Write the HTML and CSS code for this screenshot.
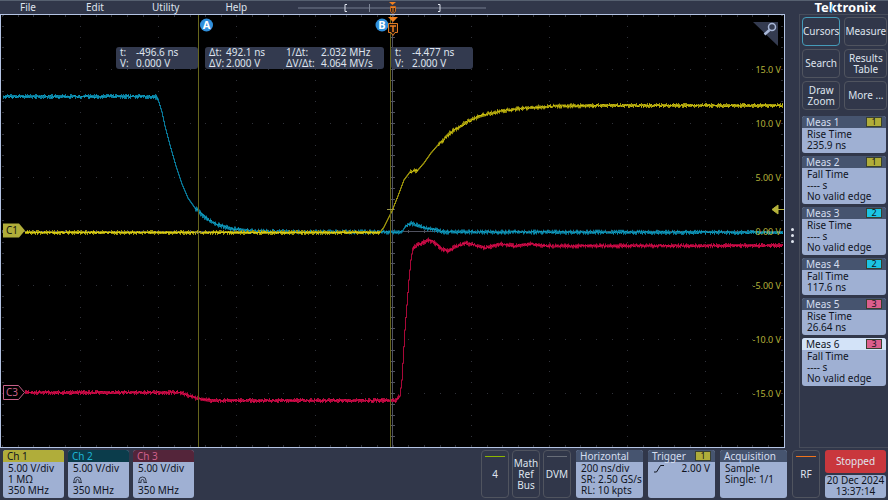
FILE: index.html
```
<!DOCTYPE html>
<html lang="en">
<head>
    <meta charset="UTF-8">
    <title>Tektronix</title>
    <link rel="stylesheet" href="styles.css">
</head>
<body>

<header class="topbar">
    <nav class="menu">
        <button>File</button>
        <button>Edit</button>
        <button>Utility</button>
        <button>Help</button>
    </nav>
    <svg class="record" width="190" height="14" viewBox="297 0 190 14" aria-hidden="true">
        <path d="M298 7H486" stroke="#747c8e"/>
        <path d="M369.500 3v8" stroke="#7d8596"/>
        <path d="M347 3.500h-2v7h2M438 3.500h2v7h-2" stroke="#dfe4ee" fill="none"/>
        <path d="M389 1h7l-3.500 3z" fill="#f08020"/>
        <path d="M390.500 5.500h5v5l-2.500 2l-2.500 -2z" fill="#30261f" stroke="#c96c22"/>
        <path d="M391 6.500h4M393 7v4" stroke="#f08020"/>
    </svg>
    <div class="logo">Tektronix</div>
</header>

<main class="middle">
    <section class="plot">
        <svg class="screen" viewBox="1 15 783 432" preserveAspectRatio="none">
            <g id="grid"></g>
            <g id="traces"></g>
            <path class="cursor_line" d="M198.500 15V447M390.500 15V447"/>
            <path class="cross" d="M387 209.500h7M195 232.500h7"/>
            <g class="scale">
                <text x="781" y="73">15.0 V</text>
                <text x="781" y="127">10.0 V</text>
                <text x="781" y="181">5.00 V</text>
                <text x="781" y="235">0.00 V</text>
                <text x="781" y="289">-5.00 V</text>
                <text x="781" y="343">-10.0 V</text>
                <text x="781" y="397">-15.0 V</text>
            </g>
            <path d="M784 209.500h-7M778 205l-6 4.500l6 4.500z" fill="#b5b23a" stroke="#b5b23a"/>
            <path d="M3 223.500h16l6 7l-6 7h-16z" fill="#b0ad3a"/>
            <text class="tag tag_1" x="6" y="234">C1</text>
            <path d="M3.500 385.500h15l6 7l-6 7h-15z" fill="#000" stroke="#c66088"/>
            <text class="tag tag_3" x="6" y="396">C3</text>
            <circle cx="206.500" cy="25" r="6.500" fill="#2f8fdc"/>
            <text class="knob" x="206.500" y="29">A</text>
            <circle cx="382" cy="25" r="6.500" fill="#2f8fdc"/>
            <text class="knob" x="382" y="29">B</text>
            <path d="M388 17h10l-5 5z" fill="#f08020"/>
            <path d="M388.500 23.500h9v9h-2.500l-2 3l-2 -3h-2.500z" fill="#1a120c" stroke="#e07a22"/>
            <path d="M390 26h6M393 26v6" stroke="#f08020" stroke-width="1.500"/>
            <path d="M753 22h25v24z" fill="#343b50"/>
            <circle cx="772" cy="27" r="3.500" fill="none" stroke="#a9b8d8" stroke-width="1.500"/>
            <path d="M769.500 30l-5 4.500" stroke="#a9b8d8" stroke-width="2.500"/>
        </svg>
        <div class="readouts">
            <div class="readout readout_a">
                <span>t:</span><span>-496.6 ns</span>
                <span>V:</span><span>0.000 V</span>
            </div>
            <div class="readout readout_delta">
                <span>Δt:</span><span>492.1 ns</span><span>1/Δt:</span><span>2.032 MHz</span>
                <span>ΔV:</span><span>2.000 V</span><span>ΔV/Δt:</span><span>4.064 MV/s</span>
            </div>
            <div class="readout readout_b">
                <span>t:</span><span>-4.477 ns</span>
                <span>V:</span><span>2.000 V</span>
            </div>
        </div>
    </section>

    <div class="handle"><i></i><i></i><i></i></div>

    <aside class="side">
        <div class="tools">
            <button class="tool active">Cursors</button>
            <button class="tool">Measure</button>
            <button class="tool">Search</button>
            <button class="tool">Results<br>Table</button>
            <button class="tool">Draw<br>Zoom</button>
            <button class="tool">More ...</button>
        </div>
        <div class="card">
            <h3>Meas 1 <b class="badge ch_1">1</b></h3>
            <p>Rise Time<br>235.9 ns</p>
        </div>
        <div class="card">
            <h3>Meas 2 <b class="badge ch_1">1</b></h3>
            <p>Fall Time<br>---- s<br>No valid edge</p>
        </div>
        <div class="card">
            <h3>Meas 3 <b class="badge ch_2">2</b></h3>
            <p>Rise Time<br>---- s<br>No valid edge</p>
        </div>
        <div class="card">
            <h3>Meas 4 <b class="badge ch_2">2</b></h3>
            <p>Fall Time<br>117.6 ns</p>
        </div>
        <div class="card">
            <h3>Meas 5 <b class="badge ch_3">3</b></h3>
            <p>Rise Time<br>26.64 ns</p>
        </div>
        <div class="card selected">
            <h3>Meas 6 <b class="badge ch_3">3</b></h3>
            <p>Fall Time<br>---- s<br>No valid edge</p>
        </div>
    </aside>
</main>

<footer class="bottom">
    <div class="channels">
        <div class="card channel_1">
            <h3>Ch 1</h3>
            <p>5.00 V/div<br>1 MΩ<br>350 MHz</p>
        </div>
        <div class="card channel_2">
            <h3>Ch 2</h3>
            <p>5.00 V/div<br><svg class="probe" width="9" height="8" viewBox="0 0 9 8"><path d="M1 6V4.500a3.500 3.500 0 0 1 7 0V6M3 7V5a1.500 1.500 0 0 1 3 0v2M0 6.500h3M6 6.500h3"/></svg><br>350 MHz</p>
        </div>
        <div class="card channel_3">
            <h3>Ch 3</h3>
            <p>5.00 V/div<br><svg class="probe" width="9" height="8" viewBox="0 0 9 8"><path d="M1 6V4.500a3.500 3.500 0 0 1 7 0V6M3 7V5a1.500 1.500 0 0 1 3 0v2M0 6.500h3M6 6.500h3"/></svg><br>350 MHz</p>
        </div>
    </div>

    <div class="extras">
        <button class="slot bar_green">4</button>
        <button class="slot">Math<br>Ref<br>Bus</button>
        <button class="slot bar_grey">DVM</button>
    </div>
    <div class="settings">
        <div class="card">
            <h3>Horizontal</h3>
            <p>200 ns/div<br>SR: 2.50 GS/s<br>RL: 10 kpts</p>
        </div>
        <div class="card">
            <h3>Trigger <b class="badge ch_1">1</b></h3>
            <p class="level">
                <svg width="12" height="9" viewBox="0 0 12 9"><path d="M1 8h2.500l4 -6.500h3.500" fill="none" stroke="#10141e"/></svg>
                2.00 V
            </p>
        </div>
        <div class="card">
            <h3>Acquisition</h3>
            <p>Sample<br>Single: 1/1</p>
        </div>
    </div>
    <button class="slot bar_orange">RF</button>
    <div class="status">
        <button class="stopped">Stopped</button>
        <div class="clock">20 Dec 2024<br>13:37:14</div>
    </div>
</footer>

<script src="script.js"></script>
</body>
</html>
```

FILE: styles.css
```
* {
    box-sizing: border-box;
}
body {
    margin: 0;
    height: 100vh;
    display: flex;
    flex-direction: column;
    background-color: #31374a;
    color: #dfe4ee;
    font: 10px/11px "Noto Sans", "Open Sans", sans-serif;
    overflow: hidden;
}
button {
    font: inherit;
    color: inherit;
    background: none;
    border: none;
    padding: 0;
    cursor: pointer;
}
h3, p {
    margin: 0;
    font-size: 10px;
    font-weight: normal;
}

/* top bar */
.topbar {
    display: flex;
    align-items: center;
    height: 14px;
    border-top: 1px solid #566070;
}
.menu {
    display: flex;
    gap: 46px;
    width: 297px;
    padding-left: 20px;
}
.menu button {
    min-width: 20px;
    text-align: left;
}
.logo {
    position: relative;
    margin-left: auto;
    margin-right: 12px;
    font-size: 13px;
    line-height: 13px;
    font-weight: bold;
    color: #fff;
}
/* blue slash of the k */
.logo:after {
    content: '';
    position: absolute;
    top: 3px;
    left: 16px;
    width: 3px;
    height: 9px;
    background-color: #2f9be0;
    clip-path: polygon(60% 0, 100% 0, 40% 100%, 0 100%);
}

/* waveform view */
.middle {
    display: flex;
    flex: 1;
    min-height: 0;
}
.plot {
    position: relative;
    flex: 1;
    min-width: 0;
    background-color: #000;
    border: 1px solid #b4c4e4;
}
.screen {
    display: block;
    width: 100%;
    height: 100%;
}
.grid_dots {
    fill: none;
    stroke: #30323a;
}
.grid_axis {
    fill: none;
    stroke: #50525f;
}
.wave {
    fill: none;
}
.cursor_line {
    fill: none;
    stroke: #66651c;
}
.cross {
    stroke: #98954a;
}
.scale text {
    font-size: 9px;
    text-anchor: end;
    fill: #b4b13a;
}
.tag {
    font-size: 10px;
}
.tag_1 {
    fill: #15170c;
}
.tag_3 {
    fill: #c66088;
}
.knob {
    font-size: 11px;
    font-weight: bold;
    text-anchor: middle;
    fill: #fff;
}
.readouts {
    position: absolute;
    top: 32px;
    left: 115px;
    display: flex;
    gap: 7px;
}
.readout {
    display: grid;
    padding: 0 4px;
    background-color: #333a4f;
    border-radius: 3px;
    white-space: nowrap;
}
.readout_a {
    width: 82px;
    grid-template-columns: 16px 1fr;
}
.readout_delta {
    width: 179px;
    grid-template-columns: 17px 60px 35px 1fr;
}
.readout_b {
    width: 82px;
    grid-template-columns: 17px 1fr;
}

.handle {
    width: 14px;
    padding-top: 8px;
    display: flex;
    flex-direction: column;
    align-items: center;
    justify-content: center;
    gap: 3px;
}
.handle i {
    width: 3px;
    height: 3px;
    border-radius: 50%;
    background-color: #dfe4ee;
}

/* right side */
.side {
    width: 89px;
    padding: 2px 2px 0;
    border: 1px solid #474c5a;
    border-right: none;
    display: flex;
    flex-direction: column;
    gap: 3px;
}
.tools {
    display: grid;
    grid-template-columns: 1fr 1fr;
    grid-auto-rows: 29px;
    gap: 3px 4px;
    padding-bottom: 3px;
}
.tool, .slot {
    border: 1px solid #50545f;
    border-radius: 4px;
}
.tool.active {
    border-color: #459bb8;
}

.card {
    background-color: #9fb0d3;
    color: #10141e;
    border-radius: 3px;
    overflow: hidden;
    padding-bottom: 2px;
}
.card h3 {
    display: flex;
    align-items: center;
    justify-content: space-between;
    height: 12px;
    padding: 0 4px;
    background-color: #46546f;
    color: #d5deef;
}
.card p {
    padding: 1px 5px 0;
    white-space: nowrap;
}
.card.selected h3 {
    background-color: #d3e3f8;
    color: #10141e;
}
.card .badge {
    width: 16px;
    height: 10px;
    border: 1px solid #39402f;
    font-size: 9px;
    line-height: 8px;
    font-weight: normal;
    text-align: center;
    color: #10141e;
}
.ch_1 {
    background-color: #b0ad3a;
}
.ch_2 {
    background-color: #1cc4e4;
}
.ch_3 {
    background-color: #dc5f8d;
}

/* bottom bar */
.bottom {
    display: flex;
    gap: 5px;
    height: 52px;
    padding: 2px 2px 2px 3px;
}
.channels {
    display: flex;
    gap: 4px;
}
.channels .card {
    width: 61px;
}
.channel_1 h3 {
    background-color: #b0ad3a;
    color: #10141e;
}
.channel_2 h3 {
    background-color: #0b3c4b;
    color: #1cb4d4;
}
.channel_3 h3 {
    background-color: #54253a;
    color: #d0608c;
}
.probe {
    display: inline-block;
    vertical-align: top;
    margin-top: 2px;
    fill: none;
    stroke: #333a4a;
}
.extras {
    display: flex;
    gap: 3px;
    margin-left: auto;
}
.slot {
    position: relative;
    width: 28px;
}
.bar_green:before, .bar_grey:before, .bar_orange:before {
    content: '';
    position: absolute;
    top: 5px;
    left: 3px;
    right: 3px;
    height: 1px;
    background-color: #8db600;
}
.bar_grey:before {
    background-color: #686d78;
}
.bar_orange:before {
    background-color: #f0741c;
}
.settings {
    display: flex;
    gap: 5px;
}
.settings .card {
    width: 67px;
}
.level {
    display: flex;
    justify-content: space-between;
    align-items: center;
}
.status {
    display: flex;
    flex-direction: column;
    gap: 2px;
    width: 61px;
}
.stopped {
    height: 23px;
    background-color: #c9373d;
    border-radius: 3px;
}
.clock {
    height: 23px;
    border-radius: 3px;
    background-color: #9fb0d3;
    color: #10141e;
    text-align: center;
    white-space: nowrap;
}
```

FILE: script.js
```
let svgNS = 'http://www.w3.org/2000/svg',
    grid = document.querySelector('#grid'),
    traces = document.querySelector('#traces');

function addPath(parent, d, cls, color) {
    let p = document.createElementNS(svgNS, 'path');
    p.setAttribute('d', d);
    p.setAttribute('class', cls);
    if(color) p.setAttribute('stroke', color);
    parent.appendChild(p);
}

// graticule: 10 x 8 divisions, 5 dots in each
let dots = '',
    axis = 'M392.5 15V447M2 231.5H783';
for(let i = 0; i <= 50; i++) {
    let x = Math.round(2 + i * 15.63);
    for(let j = 1; j < 8; j++) {
        dots += 'M' + x + ' ' + (15.5 + j * 54) + 'h1';
    }
    axis += 'M' + (x + 0.5) + ' 230v3';
    dots += 'M' + (x + 0.5) + ' 15v2M' + (x + 0.5) + ' 445v2';
}
for(let j = 0; j <= 40; j++) {
    let y = Math.round(15 + j * 10.8) + 0.5;
    for(let i = 1; i < 10; i++) {
        dots += 'M' + Math.round(2 + i * 78.15) + ' ' + y + 'h1';
    }
    axis += 'M391 ' + y + 'h4';
    dots += 'M2 ' + y + 'h2M781 ' + y + 'h2';
}
addPath(grid, dots, 'grid_dots');
addPath(grid, axis, 'grid_axis');

// fixed seed, so the noise is always the same
let seed = 7;
function rnd() {
    seed = (seed * 16807) % 2147483647;
    return seed / 2147483647;
}

function level(points, x) {
    for(let i = 1; i < points.length; i++) {
        let a = points[i - 1],
            b = points[i];
        if(x <= b[0]) return a[1] + (b[1] - a[1]) * (x - a[0]) / (b[0] - a[0]);
    }
    return points[points.length - 1][1];
}

// dim band with spikes, bright core on top of it
function drawWave(points, dim, bright, noise) {
    let band = '',
        core = '';
    for(let x = points[0][0]; x < 783; x++) {
        let y = level(points, x),
            next = level(points, x + 1),
            steep = Math.abs(next - y) > 1,
            up = steep ? 0.5 : 0.5 + Math.round(rnd() * noise),
            down = steep ? 0.5 : 0.5 + Math.round(rnd() * noise);
        band += 'M' + (x + 0.5) + ' ' + (Math.min(y, next) - up).toFixed(1) +
            'V' + (Math.max(y, next) + down).toFixed(1);
        if(!steep) {
            core += 'M' + x + ' ' + (y + (rnd() - 0.5) * noise).toFixed(1) + 'h1';
        }
    }
    addPath(traces, band, 'wave', dim);
    addPath(traces, core, 'wave', bright);
}

drawWave([[3, 96.5], [155, 96.5], [158, 99], [162, 112], [165, 126], [170, 145], [176, 166],
    [182, 184], [188, 198], [195, 208], [200, 213], [207, 219], [215, 224], [230, 228.5],
    [250, 231], [300, 232], [402, 232], [405, 227], [410, 223], [416, 225], [425, 228],
    [435, 230], [445, 232], [783, 232.5]], '#087898', '#14a4c6', 2);

drawWave([[25, 392.5], [180, 392.5], [185, 394], [195, 398], [210, 400.5], [395, 400.5], [400, 396],
    [402, 380], [405, 330], [409, 280], [411, 260], [413, 248], [418, 245], [428, 240],
    [435, 243], [442, 249], [448, 251], [455, 247], [465, 243], [475, 245], [485, 248],
    [500, 244], [515, 246], [530, 244], [550, 246], [783, 245.5]], '#a80838', '#e00c50', 2);

drawWave([[25, 232.5], [380, 232.5], [384, 227], [392, 211], [398, 196], [404, 180], [410, 172],
    [418, 170], [424, 163], [431, 153], [438, 145], [450, 133], [465, 123], [480, 116],
    [500, 111], [530, 107.5], [560, 106], [600, 105.5], [783, 105.5]], '#99900a', '#d4c812', 2);
addPath(traces, 'M25 232.5H380', 'wave', '#d8cd18');
```
